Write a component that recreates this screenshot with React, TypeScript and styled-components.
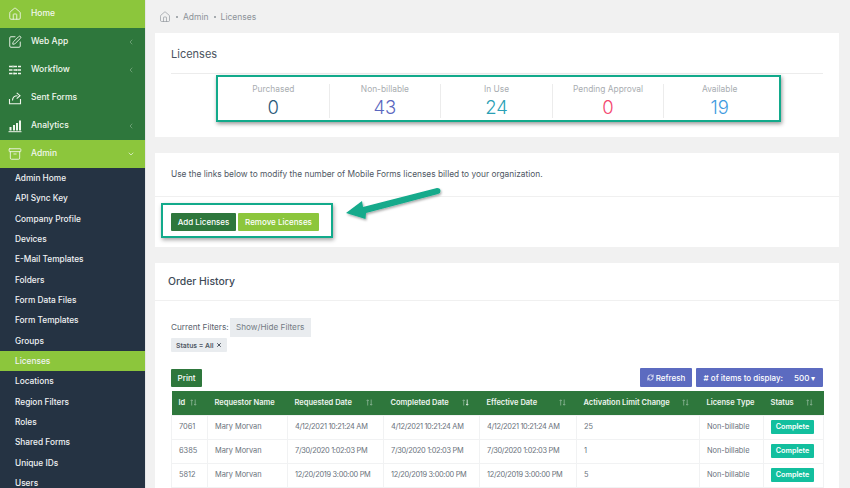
import React from "react";
import styled, { createGlobalStyle } from "styled-components";
import { Home, SquarePen, Archive, ChevronLeft, ChevronDown, RefreshCw, X } from "lucide-react";

const FONT = `"Inter", "Open Sans", "Liberation Sans", sans-serif`;

const Global = createGlobalStyle`
  html, body { margin: 0; padding: 0; height: 488px; overflow: hidden; background: #f1f1f1; }
  body { font-family: ${FONT}; }
  * { box-sizing: border-box; }
`;

const Page = styled.div`
  display: flex;
  width: 850px;
  height: 488px;
  overflow: hidden;
  position: relative;
`;

const Sidebar = styled.nav`
  flex: 0 0 146px;
  height: 488px;
  background: #253343;
  border-right: 1px solid #e4e6e8;
  overflow: hidden;
`;

const NavItem = styled.div<{ $tone: "lime" | "green" }>`
  display: flex;
  align-items: center;
  height: 28px;
  padding: 0 10px 0 8px;
  background: ${(p) => (p.$tone === "lime" ? "#8cc63c" : "#2e773c")};
  color: #f2f7ee;
  font-size: 8.5px;
  font-weight: 500;
`;

const NavIcon = styled.span`
  display: flex;
  width: 14px;
  height: 14px;
  margin-right: 9px;
  color: #f0f6ec;
`;

const NavLabel = styled.span`
  flex: 1;
  padding-bottom: 2px;
`;

const NavChevron = styled.span<{ $dim?: boolean }>`
  display: flex;
  opacity: ${(p) => (p.$dim ? 0.45 : 1)};
`;

const SubList = styled.div`
  display: flex;
  flex-direction: column;
`;

const SubItem = styled.div<{ $active?: boolean }>`
  height: 20.33px;
  line-height: 20.33px;
  padding-left: 15px;
  font-size: 8.3px;
  font-weight: 500;
  color: #f0f2f4;
  background: ${(p) => (p.$active ? "#8cc63c" : "transparent")};
`;

const Main = styled.main`
  flex: 1;
  padding: 0 11px 0 9px;
  min-width: 0;
`;

const Breadcrumb = styled.div`
  display: flex;
  align-items: center;
  height: 33px;
  padding-left: 4px;
  gap: 4px;
  font-size: 8.5px;
  color: #8d9399;
`;

const Dot = styled.span`
  width: 2px;
  height: 2px;
  margin: 0 1px;
  background: #8d9399;
  border-radius: 50%;
`;

const Card = styled.section<{ $h: number }>`
  height: ${(p) => p.$h}px;
  margin-bottom: 16px;
  background: #fff;
`;

const TitleRow = styled.div`
  height: 41px;
  margin: 0 16px;
  padding-top: 13px;
  border-bottom: 1px solid #ececec;
  font-size: 11px;
  line-height: 16px;
  color: #4a5360;
`;

const StatsBox = styled.div`
  display: flex;
  width: 565px;
  height: 47px;
  margin: 1px 0 0 61px;
  padding: 7px 4px 2px 0;
  border: 2px solid #12aa8b;
  box-shadow: 1px 2px 4px rgba(0, 0, 0, 0.4);
  background: #fff;
`;

const Stat = styled.div`
  flex: 1;
  text-align: center;
  border-right: 1px solid #ececec;
  &:last-child { border-right: 0; }
`;

const StatLabel = styled.div`
  font-size: 8.4px;
  line-height: 11px;
  color: #a9adb1;
`;

const StatValue = styled.div<{ $c: string }>`
  font-size: 18.5px;
  font-weight: 300;
  line-height: 24px;
  color: ${(p) => p.$c};
`;

const InfoRow = styled.div`
  height: 44px;
  padding: 15px 16px 0;
  border-bottom: 1px solid #f0f0f0;
  font-size: 8.35px;
  line-height: 13px;
  color: #4f5864;
`;

const ButtonsBox = styled.div`
  display: flex;
  width: fit-content;
  gap: 2px;
  margin: 6px 0 0 6px;
  padding: 8px 12px 5px 8px;
  border: 2px solid #12aa8b;
  box-shadow: 1px 2px 4px rgba(0, 0, 0, 0.35);
`;

const Btn = styled.button<{ $bg: string; $w: number; $h?: number }>`
  width: ${(p) => p.$w}px;
  height: ${(p) => p.$h ?? 18}px;
  padding: 0;
  border: 0;
  border-radius: 1px;
  background: ${(p) => p.$bg};
  color: #fff;
  font-family: ${FONT};
  font-size: 8px;
  font-weight: 500;
  display: inline-flex;
  align-items: center;
  justify-content: center;
  gap: 2px;
`;

const OrderTitle = styled.div`
  height: 38px;
  padding: 11px 13px 0;
  border-bottom: 1px solid #f0f0f0;
  font-size: 10.4px;
  font-weight: 500;
  line-height: 15px;
  color: #414b58;
`;

const Content = styled.div`
  padding: 16px 16px 0;
`;

const FilterRow = styled.div`
  display: flex;
  align-items: center;
  gap: 1px;
  height: 20px;
  font-size: 8.2px;
  color: #59626d;
`;

const FilterBtn = styled.div`
  width: 81px;
  height: 19px;
  line-height: 19px;
  text-align: center;
  background: #e9ecef;
  color: #737b84;
`;

const Tag = styled.div`
  display: flex;
  width: fit-content;
  align-items: center;
  gap: 2px;
  height: 14px;
  margin-top: 1px;
  padding: 0 5px;
  background: #e9ecef;
  color: #4e5763;
  font-size: 6.8px;
  font-weight: 600;
  border-radius: 1px;
`;

const Tools = styled.div`
  display: flex;
  align-items: flex-start;
  justify-content: space-between;
  margin-top: 17px;
  height: 22px;
`;

const ToolsRight = styled.div`
  display: flex;
  gap: 4px;
  margin-top: -1px;
`;

const ItemsCount = styled.span`
  margin-left: 9px;
`;

const Table = styled.table`
  width: 652px;
  table-layout: fixed;
  border-collapse: collapse;
  font-size: 7.4px;
`;

const Th = styled.th<{ $w: number }>`
  width: ${(p) => p.$w}px;
  height: 24px;
  padding: 0 0 0 7px;
  background: #2e773c;
  color: #eef5ef;
  text-align: left;
  font-weight: 600;
  font-size: 7.5px;
  white-space: nowrap;
`;

const ThInner = styled.div`
  display: flex;
  align-items: center;
  justify-content: space-between;
  padding-right: 11px;
`;

const SortSvg = styled.svg`
  flex: none;
  display: block;
`;

const Td = styled.td<{ $date?: boolean }>`
  height: 24px;
  padding: 0 0 0 7px;
  border: 1px solid #f1f2f3;
  color: #6a727c;
  white-space: nowrap;
  overflow: hidden;
  line-height: 1;
  letter-spacing: ${(p) => (p.$date ? "-0.3px" : "0")};
`;

const Badge = styled.span`
  display: block;
  width: 43px;
  height: 14px;
  line-height: 14px;
  text-align: center;
  border-radius: 1px;
  background: #12bf9e;
  color: #fff;
  font-size: 7.2px;
  font-weight: 600;
`;

const ArrowOverlay = styled.svg`
  position: absolute;
  left: 340px;
  top: 185px;
`;

const WorkflowIcon = () => (
  <svg viewBox="0 0 14 14" width="14" height="14" fill="none" stroke="currentColor" strokeWidth="1.5">
    <path d="M1 3.5h12M1 7h12M1 10.5h12" strokeDasharray="3.5 1" />
    <path d="M5 2.5v2M9 6v2M6 9.5v2" strokeWidth="1" />
  </svg>
);

const SentIcon = () => (
  <svg viewBox="0 0 14 14" width="14" height="14" fill="none" stroke="currentColor" strokeWidth="1.1">
    <path d="M1.5 8v4.7h11V8" />
    <path d="M4.5 9.5c0-3 2-4.8 5-4.8" />
    <path d="M8.7 1.8 12 4.7 8.7 7.6" />
  </svg>
);

const BarsIcon = () => (
  <svg viewBox="0 0 14 14" width="14" height="14" fill="currentColor">
    <rect x="1.5" y="8" width="2" height="3.5" />
    <rect x="5" y="6" width="2" height="5.5" />
    <rect x="8" y="4" width="2" height="7.5" />
    <rect x="11" y="1.5" width="2" height="10" />
    <rect x="0.5" y="12.2" width="13" height="1" />
  </svg>
);

const SortIcons = ({ on }: { on?: boolean }) => (
  <SortSvg width="7" height="7" viewBox="0 0 7 7" fill="none" strokeWidth="0.8">
    <path d="M1.7 6.5V.8M.6 2 1.7.8 2.8 2" stroke="#8fb898" />
    <path d="M5.2.5v5.7M4.1 5 5.2 6.2 6.3 5" stroke={on ? "#f4f8f5" : "#8fb898"} />
  </SortSvg>
);

const subs = [
  "Admin Home", "API Sync Key", "Company Profile", "Devices", "E-Mail Templates", "Folders",
  "Form Data Files", "Form Templates", "Groups", "Licenses", "Locations", "Region Filters",
  "Roles", "Shared Forms", "Unique IDs", "Users",
];

const stats = [
  { l: "Purchased", v: "0", c: "#2b5a7a" },
  { l: "Non-billable", v: "43", c: "#5a67c0" },
  { l: "In Use", v: "24", c: "#2a9fb5" },
  { l: "Pending Approval", v: "0", c: "#f4476f" },
  { l: "Available", v: "19", c: "#3f9be0" },
];

const cols = [
  { t: "Id", w: 36, s: true },
  { t: "Requestor Name", w: 80, s: false },
  { t: "Requested Date", w: 96, s: true },
  { t: "Completed Date", w: 96, s: true, on: true },
  { t: "Effective Date", w: 97, s: true },
  { t: "Activation Limit Change", w: 123, s: true },
  { t: "License Type", w: 64, s: false },
  { t: "Status", w: 60, s: true },
];

const rows = [
  ["7061", "Mary Morvan", "4/12/2021 10:21:24 AM", "4/12/2021 10:21:24 AM", "4/12/2021 10:21:24 AM", "25"],
  ["6385", "Mary Morvan", "7/30/2020 1:02:03 PM", "7/30/2020 1:02:03 PM", "7/30/2020 1:02:03 PM", "1"],
  ["5812", "Mary Morvan", "12/20/2019 3:00:00 PM", "12/20/2019 3:00:00 PM", "12/20/2019 3:00:00 PM", "5"],
];

export default function App() {
  return (
    <Page>
      <Global />
      <Sidebar>
        <NavItem $tone="lime"><NavIcon><Home size={14} strokeWidth={1.5} /></NavIcon><NavLabel>Home</NavLabel></NavItem>
        <NavItem $tone="green"><NavIcon><SquarePen size={14} strokeWidth={1.6} /></NavIcon><NavLabel>Web App</NavLabel><NavChevron $dim><ChevronLeft size={8} /></NavChevron></NavItem>
        <NavItem $tone="green"><NavIcon><WorkflowIcon /></NavIcon><NavLabel>Workflow</NavLabel><NavChevron $dim><ChevronLeft size={8} /></NavChevron></NavItem>
        <NavItem $tone="green"><NavIcon><SentIcon /></NavIcon><NavLabel>Sent Forms</NavLabel></NavItem>
        <NavItem $tone="green"><NavIcon><BarsIcon /></NavIcon><NavLabel>Analytics</NavLabel><NavChevron $dim><ChevronLeft size={8} /></NavChevron></NavItem>
        <NavItem $tone="lime"><NavIcon><Archive size={14} strokeWidth={1.5} /></NavIcon><NavLabel>Admin</NavLabel><NavChevron><ChevronDown size={8} /></NavChevron></NavItem>
        <SubList>
          {subs.map((s) => (
            <SubItem key={s} $active={s === "Licenses"}>{s}</SubItem>
          ))}
        </SubList>
      </Sidebar>
      <Main>
        <Breadcrumb>
          <Home size={12} strokeWidth={1.3} />
          <Dot />Admin<Dot />Licenses
        </Breadcrumb>
        <Card $h={104}>
          <TitleRow>Licenses</TitleRow>
          <StatsBox>
            {stats.map((s) => (
              <Stat key={s.l}>
                <StatLabel>{s.l}</StatLabel>
                <StatValue $c={s.c}>{s.v}</StatValue>
              </Stat>
            ))}
          </StatsBox>
        </Card>
        <Card $h={94}>
          <InfoRow>Use the links below to modify the number of Mobile Forms licenses billed to your organization.</InfoRow>
          <ButtonsBox>
            <Btn $bg="#2e773c" $w={65}>Add Licenses</Btn>
            <Btn $bg="#8cc63c" $w={81}>Remove Licenses</Btn>
          </ButtonsBox>
        </Card>
        <Card $h={240}>
          <OrderTitle>Order History</OrderTitle>
          <Content>
            <FilterRow>Current Filters:<FilterBtn>Show/Hide Filters</FilterBtn></FilterRow>
            <Tag>Status = All <X size={6} strokeWidth={4} /></Tag>
            <Tools>
              <Btn $bg="#2e773c" $w={31}>Print</Btn>
              <ToolsRight>
                <Btn $bg="#5c6bc0" $w={52} $h={19}><RefreshCw size={7} strokeWidth={2.5} />Refresh</Btn>
                <Btn $bg="#5c6bc0" $w={127} $h={19}># of items to display:<ItemsCount>500 ▾</ItemsCount></Btn>
              </ToolsRight>
            </Tools>
            <Table>
              <thead>
                <tr>
                  {cols.map((c) => (
                    <Th key={c.t} $w={c.w}>
                      <ThInner>{c.t}{c.s && <SortIcons on={c.on} />}</ThInner>
                    </Th>
                  ))}
                </tr>
              </thead>
              <tbody>
                {rows.map((r) => (
                  <tr key={r[0]}>
                    {r.map((v, i) => <Td key={i} $date={i >= 2 && i <= 4}>{v}</Td>)}
                    <Td>Non-billable</Td>
                    <Td><Badge>Complete</Badge></Td>
                  </tr>
                ))}
              </tbody>
            </Table>
          </Content>
        </Card>
      </Main>
      <ArrowOverlay width="110" height="45" viewBox="0 0 110 45">
        <defs>
          <filter id="sh" x="-10%" y="-20%" width="130%" height="150%">
            <feDropShadow dx="1" dy="1.5" stdDeviation="1.2" floodColor="#000" floodOpacity="0.35" />
          </filter>
        </defs>
        <path d="M6 28 L22 16 L23 22 L97 3 Q100.5 3 100.5 6 Q100.5 8.5 98 9 L26 28 L25.5 34 Z" fill="#12aa8b" filter="url(#sh)" />
      </ArrowOverlay>
    </Page>
  );
}
